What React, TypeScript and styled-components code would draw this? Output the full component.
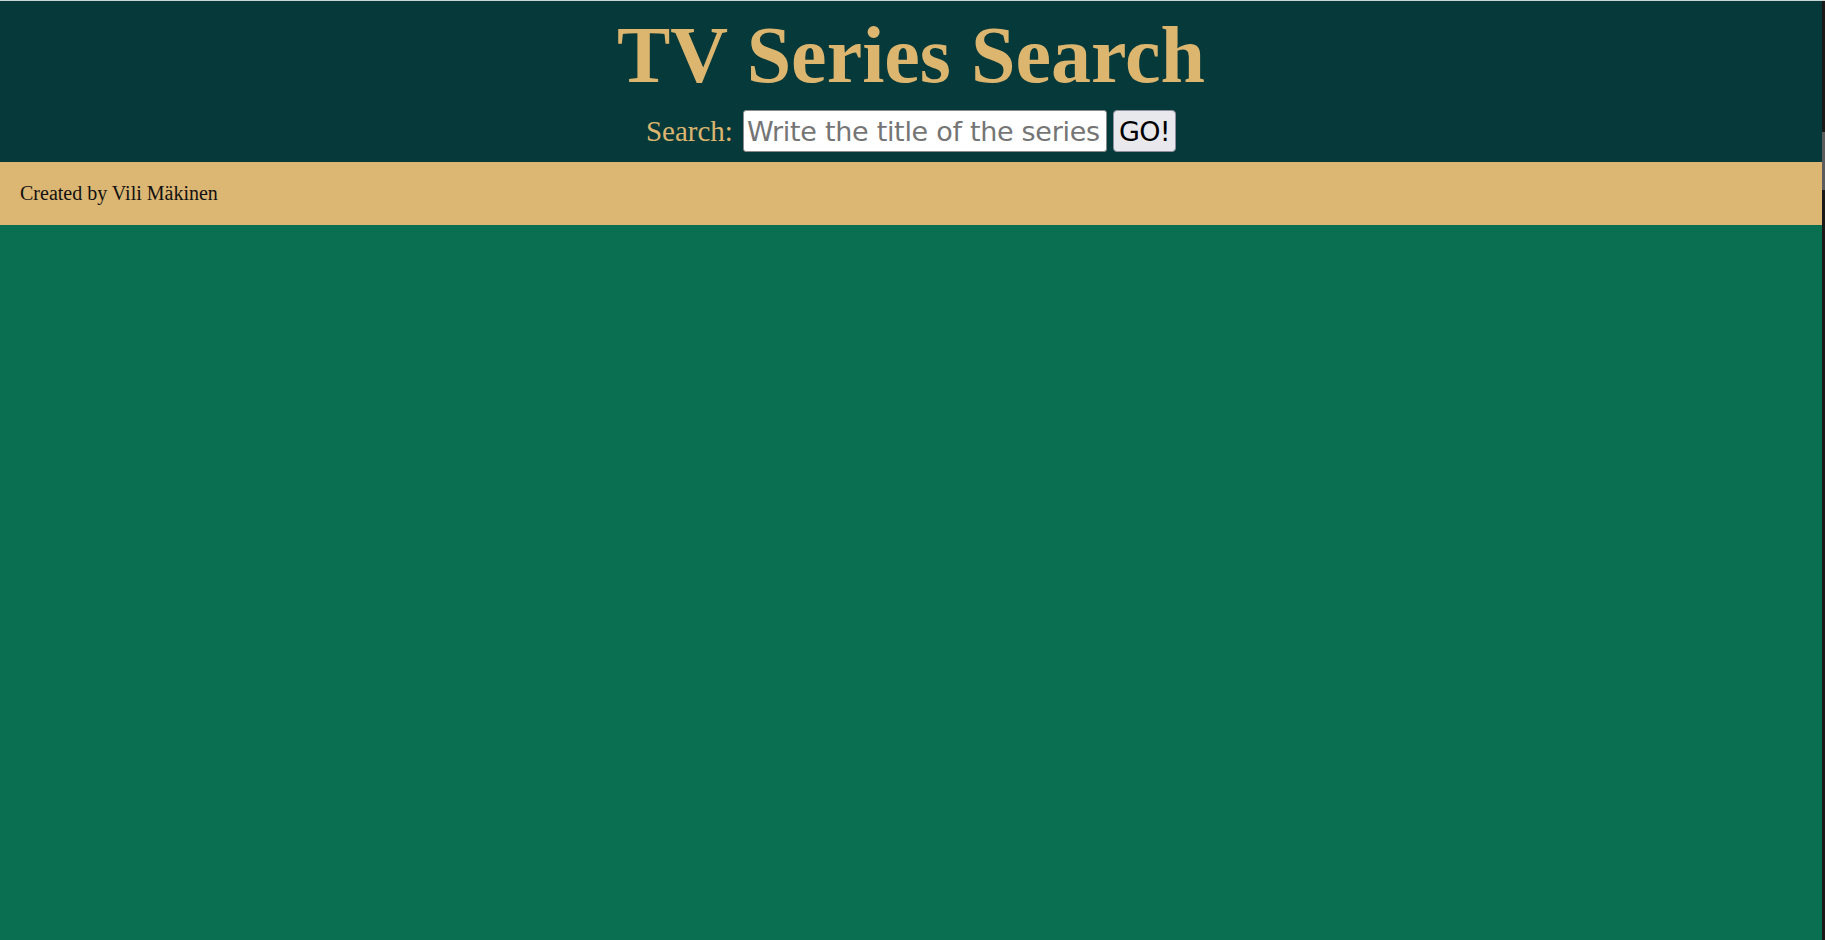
import React from "react";
import styled, { createGlobalStyle } from "styled-components";

const GlobalStyle = createGlobalStyle`
  html, body {
    margin: 0;
    padding: 0;
    height: 100%;
    overflow: hidden;
  }
  body {
    font-family: "Liberation Serif", "Times New Roman", serif;
    background: #0a6e50;
  }
`;

const Shell = styled.div`
  display: flex;
  flex-direction: column;
  height: 100vh;
`;

const TopEdge = styled.div`
  height: 1px;
  background: #c9d6d3;
  flex: none;
`;

const Body = styled.div`
  display: flex;
  flex: 1;
  min-height: 0;
`;

const Page = styled.div`
  flex: 1;
  display: flex;
  flex-direction: column;
  background: #0a6e50;
`;

const Header = styled.header`
  display: flex;
  flex-direction: column;
  align-items: center;
  background: #063a3a;
  padding: 8px 0 10px;
`;

const Title = styled.h1`
  margin: 0;
  font-family: "Liberation Serif", "Times New Roman", serif;
  font-weight: bold;
  font-size: 80px;
  line-height: 92px;
  color: #dcb56f;
`;

const SearchRow = styled.form`
  display: flex;
  align-items: baseline;
  gap: 6px;
  margin-top: 9px;
`;

const Label = styled.label`
  font-family: "Liberation Serif", "Times New Roman", serif;
  font-size: 29px;
  color: #dcb56f;
  margin-right: 4px;
`;

const Input = styled.input`
  box-sizing: border-box;
  width: 364px;
  height: 42px;
  padding: 0 2px 0 3px;
  font-family: "DejaVu Sans", Tahoma, sans-serif;
  font-size: 27px;
  letter-spacing: -0.3px;
  color: #222;
  background: #ffffff;
  border: 1px solid #8a8a8a;
  border-radius: 3px;
  outline: none;
  &::placeholder {
    color: #757575;
  }
`;

const GoButton = styled.button`
  box-sizing: border-box;
  height: 42px;
  padding: 0 5px;
  font-family: "DejaVu Sans", Tahoma, sans-serif;
  font-size: 27px;
  letter-spacing: -0.6px;
  color: #000;
  background: #e9e9ed;
  border: 1px solid #8f8f9d;
  border-radius: 4px;
  cursor: pointer;
`;

const Footer = styled.footer`
  background: #dcb673;
  padding: 20px 20px;
  font-family: "Liberation Serif", "Times New Roman", serif;
  font-size: 20px;
  line-height: 23px;
  color: #111;
`;

const Main = styled.main`
  flex: 1;
  background: #0a6e50;
`;

const ScrollRail = styled.div`
  width: 3px;
  flex: none;
  background: #1b1a18;
  display: flex;
  flex-direction: column;
`;

const ScrollThumb = styled.div`
  margin-top: 131px;
  height: 58px;
  background: #5c5c5c;
`;

export default function App() {
  return (
    <>
      <GlobalStyle />
      <Shell>
        <TopEdge />
        <Body>
          <Page>
            <Header>
              <Title>TV Series Search</Title>
              <SearchRow onSubmit={(e) => e.preventDefault()}>
                <Label htmlFor="series">Search:</Label>
                <Input id="series" type="text" placeholder="Write the title of the series" />
                <GoButton type="submit">GO!</GoButton>
              </SearchRow>
            </Header>
            <Footer>Created by Vili Mäkinen</Footer>
            <Main />
          </Page>
          <ScrollRail>
            <ScrollThumb />
          </ScrollRail>
        </Body>
      </Shell>
    </>
  );
}
